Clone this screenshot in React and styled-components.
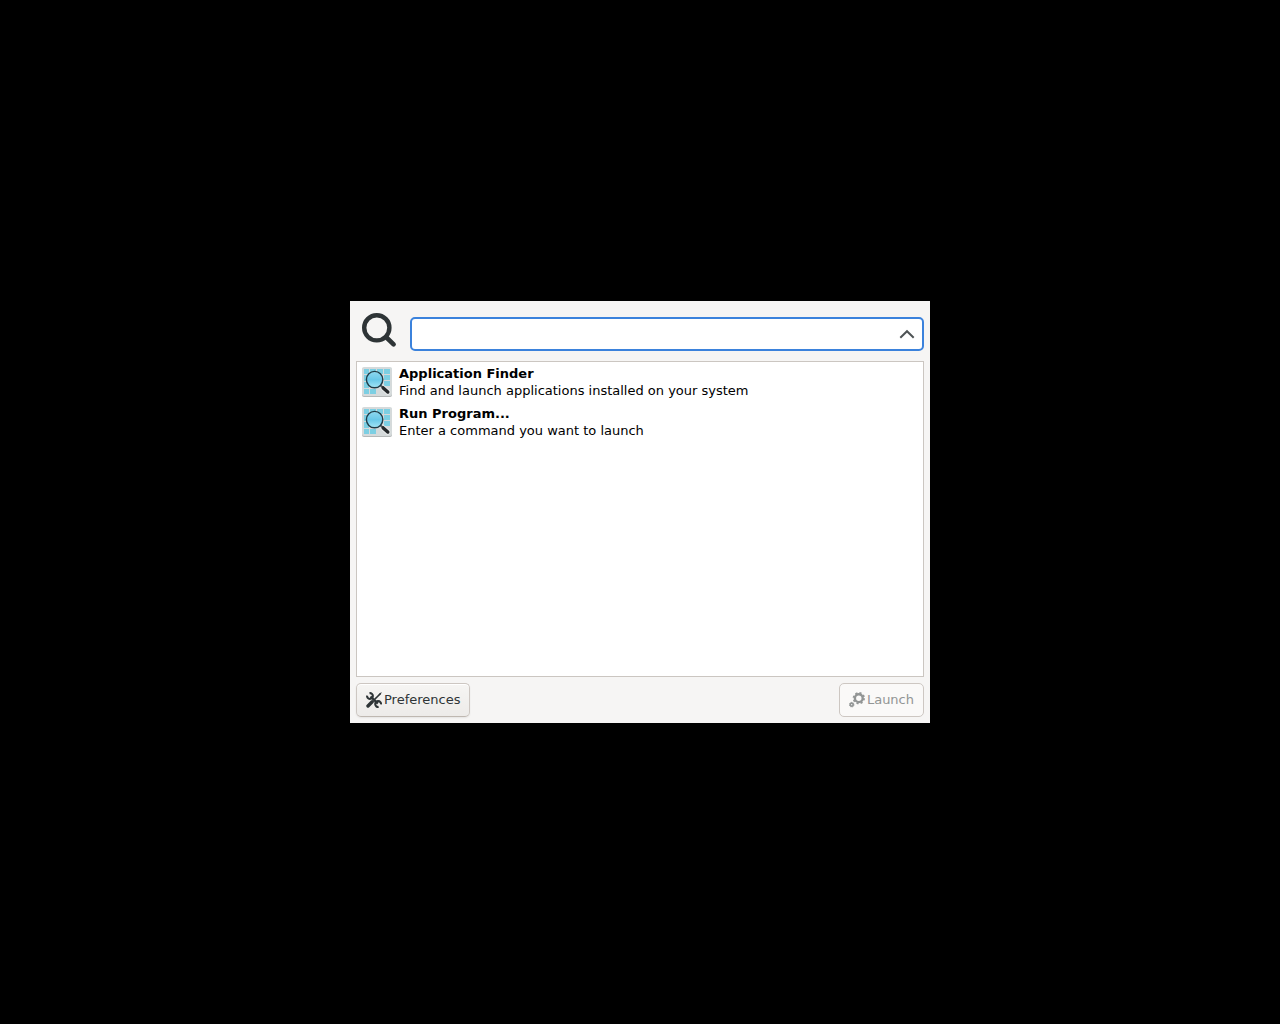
import React, { useState } from "react";
import styled, { createGlobalStyle } from "styled-components";

const GlobalStyle = createGlobalStyle`
  * { box-sizing: border-box; }
  body {
    margin: 0;
    background: #000;
    color: #000;
    font: 13px/17px "DejaVu Sans", Verdana, sans-serif;
  }
`;

const Screen = styled.main`
  min-height: 100vh;
  display: flex;
  align-items: center;
  justify-content: center;
`;

const Finder = styled.form`
  width: 580px;
  max-width: 100%;
  display: flex;
  flex-direction: column;
  gap: 6px;
  padding: 6px;
  background: #f6f5f4;
`;

const SearchBar = styled.div`
  display: flex;
  align-items: flex-end;
  gap: 6px;
`;

const SearchLabel = styled.label`
  display: flex;
  flex: none;
`;

const Field = styled.div`
  flex: 1;
  min-width: 0;
  height: 34px;
  margin-bottom: 4px;
  display: flex;
  border: 2px solid #3b82dc;
  border-radius: 5px;
  background: #fff;
`;

const Entry = styled.input`
  flex: 1;
  min-width: 0;
  padding: 0 6px;
  border: 0;
  border-radius: 5px;
  outline: 0;
  background: transparent;
  color: #000;
  font: inherit;
`;

const Toggle = styled.button`
  display: flex;
  align-items: center;
  padding: 0 7px;
  border: 0;
  background: transparent;
  color: #4e5355;
`;

const AppList = styled.ul`
  flex: 1;
  min-height: 316px;
  margin: 0;
  padding: 0;
  border: 1px solid #cbc6c1;
  background: #fff;
  list-style: none;
`;

const AppRow = styled.li`
  display: flex;
  align-items: center;
  gap: 6px;
  padding: 3px 4px;
`;

const AppText = styled.div`
  min-width: 0;
`;

const AppName = styled.div`
  font-weight: bold;
`;

const AppDescription = styled.div``;

const Actions = styled.div`
  display: flex;
  justify-content: space-between;
`;

const ActionButton = styled.button`
  height: 34px;
  display: flex;
  align-items: center;
  gap: 2px;
  padding: 0 9px 1px;
  border: 1px solid #cdc7c2;
  border-bottom-color: #bfb8b1;
  border-radius: 5px;
  background: linear-gradient(#f6f5f3, #edebe9);
  box-shadow: inset 0 1px #fff, 0 1px 2px rgba(0, 0, 0, 0.07);
  color: #2e3436;
  font: inherit;

  &:disabled {
    border-color: #cdc7c2;
    background: #faf9f8;
    box-shadow: none;
    color: #929595;
  }
`;

const SearchIcon = () => (
  <svg width="48" height="48" viewBox="0 0 48 48" fill="none" stroke="#2e3436" aria-hidden="true">
    <circle cx="20.8" cy="20.8" r="12.6" strokeWidth="4.4" />
    <path d="M30 30l7.6 7.4" strokeWidth="4.6" strokeLinecap="round" />
  </svg>
);

const ChevronUp = () => (
  <svg width="16" height="16" viewBox="0 0 16 16" fill="none" stroke="currentColor" strokeWidth="2" aria-hidden="true">
    <path d="M1.3 11.8L8 5.2l6.7 6.6" />
  </svg>
);

const FinderIcon = () => (
  <svg width="32" height="32" viewBox="0 0 32 32" aria-hidden="true">
    <defs>
      <linearGradient id="lens" x1="0" y1="0" x2="0" y2="1">
        <stop offset="0" stopColor="#8fd8ee" />
        <stop offset=".5" stopColor="#69c8e8" />
        <stop offset="1" stopColor="#a4e6f6" />
      </linearGradient>
    </defs>
    <rect x="1" y="2" width="30" height="29" rx="2" fill="#b4b8b8" />
    <rect x="1" y="1" width="30" height="29" rx="2" fill="#d5dadb" />
    <g fill="#7ccfe3">
      <path d="M3 3h5v5H3zM9 3h6v5H9zM16 3h6v5h-6zM23 3h6v5h-6z" />
      <path d="M3 9h5v6H3zM23 9h6v5h-6zM3 16h5v6H3zM23 15h6v5h-6z" />
      <path d="M3 23h5v5H3zM9 23h6v5H9z" />
    </g>
    <path d="M22.3 22L26.5 26" stroke="#fff" strokeWidth="5.6" strokeLinecap="round" opacity=".4" />
    <path d="M19.6 19.4L22.5 22" stroke="#555a5c" strokeWidth="2" />
    <path d="M22.2 21.9L26.8 26" stroke="#25292b" strokeWidth="3.4" strokeLinecap="round" />
    <circle cx="13.6" cy="13.6" r="8.2" fill="url(#lens)" stroke="#213c47" strokeWidth="1.4" />
  </svg>
);

const ToolsIcon = () => (
  <svg width="16" height="16" viewBox="0 0 16 16" fill="none" stroke="currentColor" aria-hidden="true">
    <path d="M4.5 4.5L11.8 11.6" strokeWidth="2.3" />
    <path d="M3.5 1.2A2.9 2.9 0 1 1 1.1 3.6" strokeWidth="2.1" />
    <path d="M12.6 14.9A2.9 2.9 0 1 1 15 12.4" strokeWidth="2.1" />
    <path d="M14.5 1.5L8.4 7.6" strokeWidth="1.5" />
    <path d="M12.6 2.3L15.2.3 15.7.8 13.7 3.4z" fill="currentColor" stroke="none" />
    <path d="M6.2 9.8L2 14" strokeWidth="3.4" strokeLinecap="round" />
  </svg>
);

const GearsIcon = () => (
  <svg width="16" height="16" viewBox="0 0 16 16" fill="none" stroke="currentColor" aria-hidden="true">
    <circle cx="9.8" cy="6.2" r="3.9" strokeWidth="2.4" />
    <circle cx="9.8" cy="6.2" r="5.3" strokeWidth="1.7" strokeDasharray="2.1 2.063" />
    <circle cx="2.7" cy="12.7" r="1.5" strokeWidth="1.7" />
    <circle cx="2.7" cy="12.7" r="2.3" strokeWidth=".8" strokeDasharray="1 .806" />
  </svg>
);

const applications = [
  { name: "Application Finder", description: "Find and launch applications installed on your system" },
  { name: "Run Program...", description: "Enter a command you want to launch" },
];

export default function App() {
  const [query, setQuery] = useState("");
  const shown = applications.filter(({ name }) => name.toLowerCase().includes(query.toLowerCase()));

  return (
    <>
      <GlobalStyle />
      <Screen>
        <Finder onSubmit={(event) => event.preventDefault()}>
          <SearchBar>
            <SearchLabel htmlFor="query" aria-label="Search">
              <SearchIcon />
            </SearchLabel>
            <Field>
              <Entry
                id="query"
                type="text"
                autoComplete="off"
                value={query}
                onChange={(event) => setQuery(event.target.value)}
              />
              <Toggle type="button" aria-label="Collapse">
                <ChevronUp />
              </Toggle>
            </Field>
          </SearchBar>
          <AppList>
            {shown.map(({ name, description }) => (
              <AppRow key={name}>
                <FinderIcon />
                <AppText>
                  <AppName>{name}</AppName>
                  <AppDescription>{description}</AppDescription>
                </AppText>
              </AppRow>
            ))}
          </AppList>
          <Actions>
            <ActionButton type="button">
              <ToolsIcon />
              Preferences
            </ActionButton>
            <ActionButton type="submit" disabled>
              <GearsIcon />
              Launch
            </ActionButton>
          </Actions>
        </Finder>
      </Screen>
    </>
  );
}
